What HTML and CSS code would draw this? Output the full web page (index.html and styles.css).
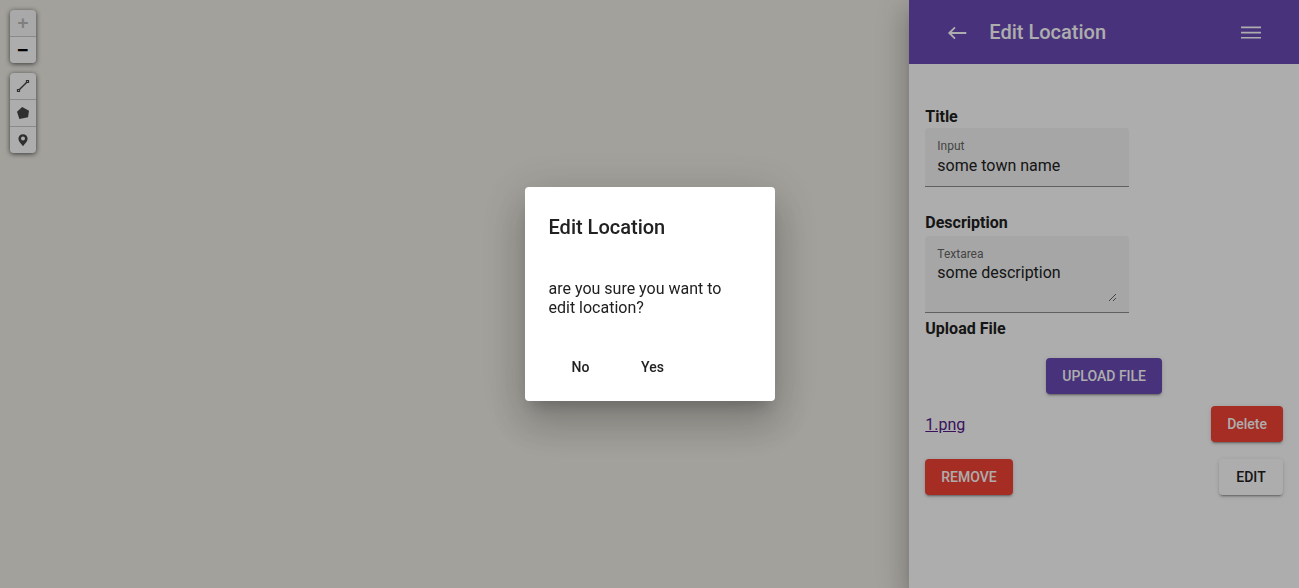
FILE: index.html
```html
<!DOCTYPE html>
<html lang="en">
<head>
<meta charset="utf-8">
<title>Edit Location</title>
<link rel="stylesheet" href="styles.css">
</head>
<body>
<div class="app">
  <main class="map">
    <div class="bar">
      <button class="tool zoom" type="button" disabled aria-label="Zoom in">+</button>
      <button class="tool zoom" type="button" aria-label="Zoom out">−</button>
    </div>
    <div class="bar">
      <button class="tool" type="button" aria-label="Draw a line">
        <svg width="14" height="14" viewBox="0 0 14 14" fill="none" stroke="#464646"><path d="M3.2 10.8 10.8 3.2" stroke-width="1.5"/><path d="M1.500 10.500h2v2h-2zM10.500 1.500h2v2h-2z" stroke-width="1.2" fill="#fff"/></svg>
      </button>
      <button class="tool" type="button" aria-label="Draw a polygon">
        <svg width="14" height="14" viewBox="0 0 14 14" fill="#464646"><path d="M6.200 0.900 13 4.700 12 11.300 3.400 13 1 5.800Z"/></svg>
      </button>
      <button class="tool" type="button" aria-label="Draw a marker">
        <svg width="14" height="14" viewBox="0 0 14 14" fill="#464646" fill-rule="evenodd"><path d="M7 1.2C4.3 1.2 2.4 3.2 2.4 5.7 2.4 8.6 5 10.2 7 13.2 9 10.2 11.6 8.6 11.6 5.7 11.6 3.2 9.7 1.2 7 1.2ZM7 3.6A2 2 0 1 1 7 7.6 2 2 0 0 1 7 3.6Z"/></svg>
      </button>
    </div>
  </main>
  <aside class="panel">
    <header class="header">
      <button class="icon-button" type="button" aria-label="Back">
        <svg width="24" height="24" viewBox="0 0 24 24" fill="none" stroke="#fff" stroke-width="1.9"><path d="M21.300 13H4.500M10 7.300 4.300 13 10 18.700"/></svg>
      </button>
      <h1 class="heading">Edit Location</h1>
      <button class="icon-button menu" type="button" aria-label="Menu">
        <svg width="24" height="24" viewBox="0 0 24 24" fill="#fff"><path d="M2 6.500h20v1.700H2zM2 11.700h20v1.700H2zM2 16.900h20v1.700H2z"/></svg>
      </button>
    </header>
    <form class="form">
      <h2 class="label">Title</h2>
      <div class="field">
        <label for="title">Input</label>
        <input id="title" type="text" value="some town name">
      </div>
      <h2 class="label next">Description</h2>
      <div class="field">
        <label for="description">Textarea</label>
        <textarea id="description">some description</textarea>
      </div>
      <h2 class="label">Upload File</h2>
      <div class="row upload"><button class="button primary" type="button">UPLOAD FILE</button></div>
      <div class="row file">
        <a href="#">1.png</a>
        <button class="button warn" type="button">Delete</button>
      </div>
      <div class="row">
        <button class="button warn" type="button">REMOVE</button>
        <button class="button" type="button">EDIT</button>
      </div>
    </form>
  </aside>
</div>
<div class="backdrop">
  <section class="dialog" role="dialog" aria-modal="true" aria-labelledby="dialog-title">
    <h2 class="heading" id="dialog-title">Edit Location</h2>
    <p>are you sure you want to edit location?</p>
    <div class="actions">
      <button class="button flat" type="button">No</button>
      <button class="button flat" type="button">Yes</button>
    </div>
  </section>
</div>
</body>
</html>
```

FILE: styles.css
```css
* { box-sizing: border-box; }
body {
  margin: 0;
  font: 16px/19px Roboto, sans-serif;
  color: #212121;
}
button, input, textarea { font: inherit; color: inherit; }
button { border: 0; padding: 0; cursor: pointer; }
svg { display: block; }

.app { display: flex; min-height: 100vh; overflow: hidden; }

.map {
  flex: 1;
  display: flex;
  flex-direction: column;
  align-items: flex-start;
  gap: 10px;
  padding: 10px;
  background: #f0ede5;
}
.bar {
  display: flex;
  flex-direction: column;
  gap: 1px;
  width: 26px;
  border-radius: 4px;
  overflow: hidden;
  background: #ccc;
  box-shadow: 0 1px 5px rgba(0, 0, 0, .65);
}
.tool {
  display: flex;
  align-items: center;
  justify-content: center;
  height: 26px;
  background: #fff;
}
.zoom { font: bold 18px/26px "DejaVu Sans Mono", monospace; color: #000; }
.zoom:disabled { background: #f9f9f9; color: #bbb; }

.panel {
  width: 30%;
  background: #fff;
  box-shadow: 0 8px 10px -5px rgba(0, 0, 0, .2), 0 16px 24px 2px rgba(0, 0, 0, .14), 0 6px 30px 5px rgba(0, 0, 0, .12);
}
.header {
  display: flex;
  align-items: center;
  gap: 20px;
  height: 64px;
  padding: 0 36px;
  background: #6a4ab6;
  color: #fff;
}
.heading { margin: 0; font-size: 20px; line-height: 32px; font-weight: 500; }
.icon-button { background: none; }
.menu { margin-left: auto; }

.form { padding: 42px 16px; }
.label { margin: 0; font-size: 16px; line-height: 22px; font-weight: 700; }
.next { margin: 25px 0 2px; }
.field {
  display: flex;
  flex-direction: column;
  width: 204px;
  margin-bottom: 5px;
  padding: 10px 12px;
  background: #f5f5f5;
  border-bottom: 1px solid #8e8e8e;
  border-radius: 4px 4px 0 0;
}
.field label { font-size: 12px; line-height: 16px; color: #666; }
.field input, .field textarea {
  display: block;
  width: 100%;
  padding: 0;
  border: 0;
  outline: 0;
  background: none;
}
.field input { height: 22px; }
.field textarea { height: 40px; padding-top: 1px; resize: vertical; overflow: hidden; }

.row { display: flex; align-items: center; justify-content: space-between; }
.upload { justify-content: center; margin: 18px 0 12px; }
.file { margin-bottom: 17px; }
.row a { color: #551a8b; }
.button {
  min-width: 64px;
  padding: 0 16px;
  border-radius: 4px;
  background: #fff;
  font-size: 14px;
  line-height: 36px;
  font-weight: 500;
  box-shadow: 0 3px 1px -2px rgba(0, 0, 0, .2), 0 2px 2px rgba(0, 0, 0, .14), 0 1px 5px rgba(0, 0, 0, .12);
}
.primary { background: #6a4ab6; color: #fff; }
.warn { background: #f44336; color: #fff; }
.flat { background: none; box-shadow: none; }

.backdrop {
  position: fixed;
  inset: 0;
  display: flex;
  align-items: center;
  justify-content: center;
  background: rgba(0, 0, 0, .32);
}
.dialog {
  width: 250px;
  padding: 24px 24px 16px;
  border-radius: 4px;
  background: #fff;
  box-shadow: 0 11px 15px -7px rgba(0, 0, 0, .2), 0 24px 38px 3px rgba(0, 0, 0, .14), 0 9px 46px 8px rgba(0, 0, 0, .12);
}
.dialog p { margin: 36px 0 32px; }
.actions { display: flex; gap: 8px; }
```
